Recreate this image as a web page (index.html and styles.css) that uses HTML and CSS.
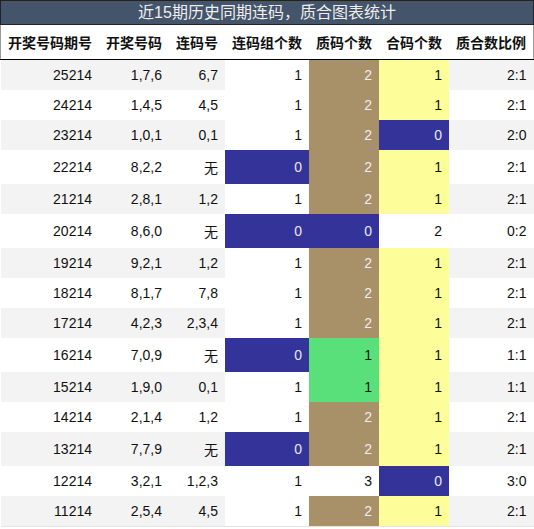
FILE: index.html
```
<!DOCTYPE html>
<html>
<head>
    <meta charset="utf-8">
    <title>近15期历史同期连码</title>
    <link rel="stylesheet" href="styles.css">
</head>
<body>
    <div class="title">近15期历史同期连码，质合图表统计</div>
    <table class="stats">
        <thead>
            <tr>
                <th>开奖号码期号</th>
                <th>开奖号码</th>
                <th>连码号</th>
                <th>连码组个数</th>
                <th>质码个数</th>
                <th>合码个数</th>
                <th>质合数比例</th>
            </tr>
        </thead>
        <tbody>
            <tr><td>25214</td><td>1,7,6</td><td>6,7</td><td class="cnt">1</td><td class="tan">2</td><td class="yellow">1</td><td>2:1</td></tr>
            <tr><td>24214</td><td>1,4,5</td><td>4,5</td><td class="cnt">1</td><td class="tan">2</td><td class="yellow">1</td><td>2:1</td></tr>
            <tr><td>23214</td><td>1,0,1</td><td>0,1</td><td class="cnt">1</td><td class="tan">2</td><td class="blue">0</td><td>2:0</td></tr>
            <tr><td>22214</td><td>8,2,2</td><td>无</td><td class="cnt blue">0</td><td class="tan">2</td><td class="yellow">1</td><td>2:1</td></tr>
            <tr><td>21214</td><td>2,8,1</td><td>1,2</td><td class="cnt">1</td><td class="tan">2</td><td class="yellow">1</td><td>2:1</td></tr>
            <tr><td>20214</td><td>8,6,0</td><td>无</td><td class="cnt blue">0</td><td class="blue">0</td><td>2</td><td>0:2</td></tr>
            <tr><td>19214</td><td>9,2,1</td><td>1,2</td><td class="cnt">1</td><td class="tan">2</td><td class="yellow">1</td><td>2:1</td></tr>
            <tr><td>18214</td><td>8,1,7</td><td>7,8</td><td class="cnt">1</td><td class="tan">2</td><td class="yellow">1</td><td>2:1</td></tr>
            <tr><td>17214</td><td>4,2,3</td><td>2,3,4</td><td class="cnt">1</td><td class="tan">2</td><td class="yellow">1</td><td>2:1</td></tr>
            <tr><td>16214</td><td>7,0,9</td><td>无</td><td class="cnt blue">0</td><td class="green">1</td><td class="yellow">1</td><td>1:1</td></tr>
            <tr><td>15214</td><td>1,9,0</td><td>0,1</td><td class="cnt">1</td><td class="green">1</td><td class="yellow">1</td><td>1:1</td></tr>
            <tr><td>14214</td><td>2,1,4</td><td>1,2</td><td class="cnt">1</td><td class="tan">2</td><td class="yellow">1</td><td>2:1</td></tr>
            <tr><td>13214</td><td>7,7,9</td><td>无</td><td class="cnt blue">0</td><td class="tan">2</td><td class="yellow">1</td><td>2:1</td></tr>
            <tr><td>12214</td><td>3,2,1</td><td>1,2,3</td><td class="cnt">1</td><td>3</td><td class="blue">0</td><td>3:0</td></tr>
            <tr><td>11214</td><td>2,5,4</td><td>4,5</td><td class="cnt">1</td><td class="tan">2</td><td class="yellow">1</td><td>2:1</td></tr>
        </tbody>
    </table>
</body>
</html>
```

FILE: styles.css
```
body {
    margin: 0;
    padding: 0;
    background: #fff;
    font-family: "Liberation Sans", "Noto Sans CJK SC", sans-serif;
    color: #111;
}

.title {
    background: #44546a;
    color: #eee;
    font-size: 16px;
    line-height: 23px;
    text-align: center;
    border: 1px solid #222;
}

.stats {
    width: 100%;
    border-collapse: collapse;
    font-size: 14px;
    border-bottom: 1px solid #e4e4e4;
}

.stats th {
    font-weight: bold;
    text-align: right;
    padding: 7px;
    white-space: nowrap;
    border-bottom: 1px solid #000;
    color: #111;
}

.stats thead tr {
    border-left: 1px solid #999;
    border-right: 1px solid #999;
}

.stats td {
    text-align: right;
    padding: 7px;
    white-space: nowrap;
}

.stats tbody tr:nth-child(odd) {
    background: #f3f3f3;
}

/* 连码组个数 always white */
.stats td.cnt {
    background: #fff;
}

.stats td.tan {
    background: #a89069;
    color: #eee;
}

.stats td.yellow {
    background: #fdfd99;
}

.stats td.blue {
    background: #333399;
    color: #e8e8f0;
}

.stats td.green {
    background: #5ae07b;
}
```
